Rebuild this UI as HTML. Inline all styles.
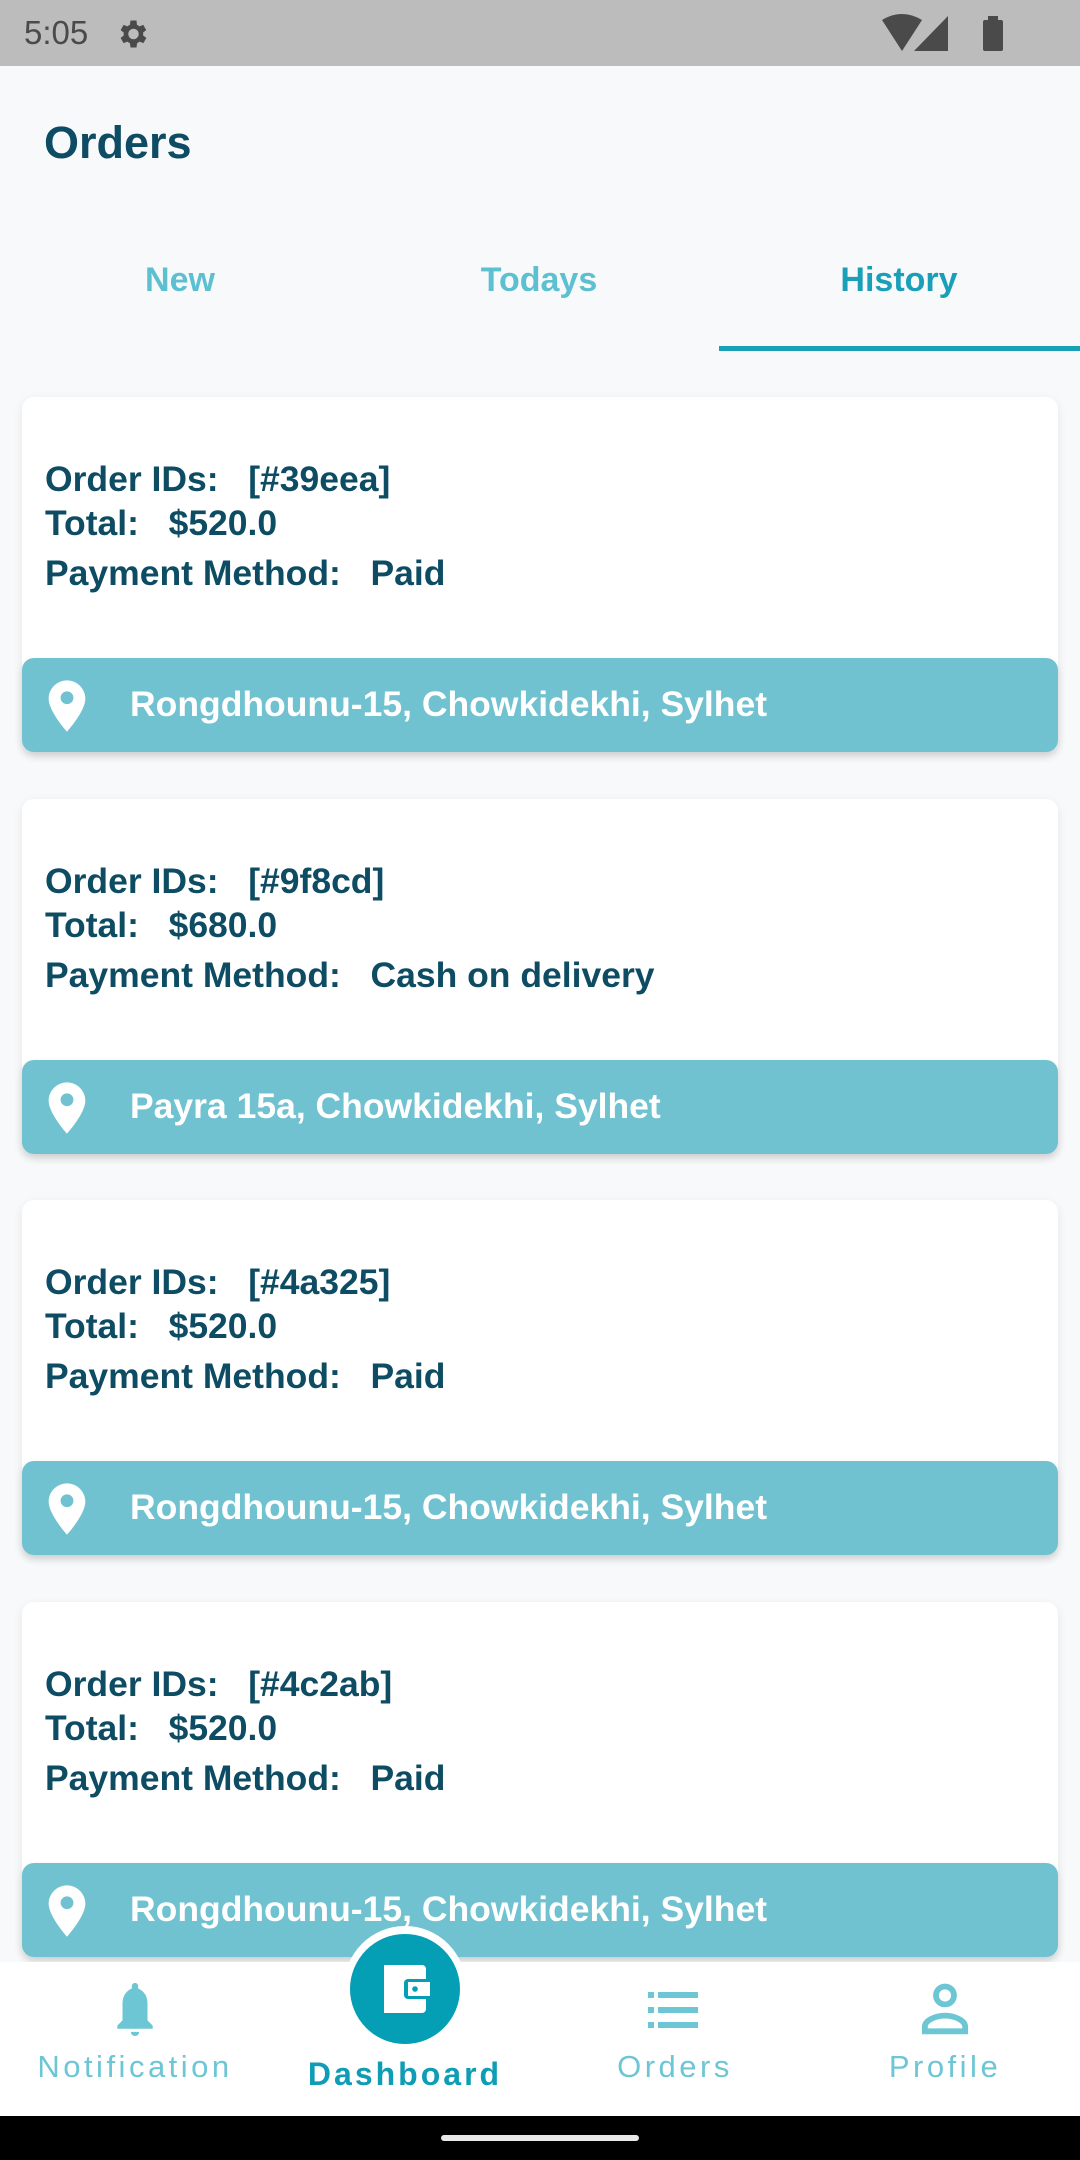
<!DOCTYPE html>
<html><head><meta charset="utf-8"><style>
*{margin:0;padding:0;box-sizing:border-box}
body{width:1080px;height:2160px;background:#f8f9fa;font-family:"Liberation Sans",Arial,sans-serif;position:relative;overflow:hidden}
.abs{position:absolute}
.status{left:0;top:0;width:1080px;height:66px;background:#bcbcbc}
.card{left:22px;width:1036px;height:355px;background:#fff;border-radius:12px;box-shadow:0 3px 10px rgba(0,0,0,0.08)}
.line{position:absolute;left:23px;font-size:35.5px;font-weight:bold;color:#0d4c63;white-space:pre;line-height:40px}
.addr{position:absolute;left:0;top:261px;width:1036px;height:94px;background:#70c2d0;border-radius:12px;box-shadow:0 4px 8px rgba(0,0,0,0.12)}
.addr span{position:absolute;left:108px;top:26px;font-size:35.5px;font-weight:bold;color:#fff;line-height:40px;white-space:nowrap}
.addr svg{position:absolute;left:23px;top:20px}
.tab{top:261px;font-size:34px;font-weight:bold;color:#5cc0d1;width:360px;text-align:center}
.nl{font-size:31px;color:#6cc6d4;letter-spacing:3.5px;text-align:center;width:270px;top:2049px}
</style></head><body>
<div class="abs status"></div>
<div class="abs" style="left:24px;top:14px;font-size:33px;color:#4a4a4a">5:05</div>
<svg class="abs" style="left:114px;top:16px" width="36" height="36" viewBox="0 0 24 24"><path fill="#4a4a4a" d="M19.4 13a7.5 7.5 0 000-2l2.1-1.6-2-3.5-2.5 1a7 7 0 00-1.7-1L15 3h-4l-.4 2.9a7 7 0 00-1.7 1l-2.5-1-2 3.5L6.5 11a7.5 7.5 0 000 2l-2.1 1.6 2 3.5 2.5-1a7 7 0 001.7 1L11 21h4l.4-2.9a7 7 0 001.7-1l2.5 1 2-3.5zM13 15.5a3.5 3.5 0 110-7 3.5 3.5 0 010 7z"/></svg>
<svg class="abs" style="left:880px;top:14px" width="130" height="40" viewBox="0 0 130 40"><path fill="#4a4a4a" d="M2 6 Q22 -6 42 6 L22 37Z"/><path fill="#4a4a4a" d="M68 2 L68 37 L34 37Z"/><rect x="103" y="6" width="20" height="31" rx="2" fill="#4a4a4a"/><rect x="108" y="2" width="10" height="5" fill="#4a4a4a"/></svg>

<div class="abs" style="left:44px;top:117px;font-size:45px;font-weight:bold;color:#0d4c63">Orders</div>
<div class="abs tab" style="left:0">New</div>
<div class="abs tab" style="left:359px">Todays</div>
<div class="abs tab" style="left:719px;color:#1a9fb8">History</div>
<div class="abs" style="left:719px;top:346px;width:361px;height:5px;background:#17a0b7"></div>

<div class="abs card" style="top:397px">
<div class="line" style="top:62px">Order IDs:   [#39eea]</div>
<div class="line" style="top:106px">Total:   $520.0</div>
<div class="line" style="top:156px">Payment Method:   Paid</div>
<div class="addr"><svg width="44" height="56" viewBox="0 0 24 30"><path fill="#fff" d="M12 1C6.5 1 2 5.5 2 11c0 7 10 18 10 18s10-11 10-18C22 5.5 17.5 1 12 1zm0 13a3.5 3.5 0 110-7 3.5 3.5 0 010 7z"/></svg><span>Rongdhounu-15, Chowkidekhi, Sylhet</span></div>
</div>
<div class="abs card" style="top:799px">
<div class="line" style="top:62px">Order IDs:   [#9f8cd]</div>
<div class="line" style="top:106px">Total:   $680.0</div>
<div class="line" style="top:156px">Payment Method:   Cash on delivery</div>
<div class="addr"><svg width="44" height="56" viewBox="0 0 24 30"><path fill="#fff" d="M12 1C6.5 1 2 5.5 2 11c0 7 10 18 10 18s10-11 10-18C22 5.5 17.5 1 12 1zm0 13a3.5 3.5 0 110-7 3.5 3.5 0 010 7z"/></svg><span>Payra 15a, Chowkidekhi, Sylhet</span></div>
</div>
<div class="abs card" style="top:1200px">
<div class="line" style="top:62px">Order IDs:   [#4a325]</div>
<div class="line" style="top:106px">Total:   $520.0</div>
<div class="line" style="top:156px">Payment Method:   Paid</div>
<div class="addr"><svg width="44" height="56" viewBox="0 0 24 30"><path fill="#fff" d="M12 1C6.5 1 2 5.5 2 11c0 7 10 18 10 18s10-11 10-18C22 5.5 17.5 1 12 1zm0 13a3.5 3.5 0 110-7 3.5 3.5 0 010 7z"/></svg><span>Rongdhounu-15, Chowkidekhi, Sylhet</span></div>
</div>
<div class="abs card" style="top:1602px">
<div class="line" style="top:62px">Order IDs:   [#4c2ab]</div>
<div class="line" style="top:106px">Total:   $520.0</div>
<div class="line" style="top:156px">Payment Method:   Paid</div>
<div class="addr"><svg width="44" height="56" viewBox="0 0 24 30"><path fill="#fff" d="M12 1C6.5 1 2 5.5 2 11c0 7 10 18 10 18s10-11 10-18C22 5.5 17.5 1 12 1zm0 13a3.5 3.5 0 110-7 3.5 3.5 0 010 7z"/></svg><span>Rongdhounu-15, Chowkidekhi, Sylhet</span></div>
</div>

<div class="abs" style="left:0;top:1962px;width:1080px;height:154px;background:#fff"></div>
<div class="abs" style="left:344px;top:1926px;width:122px;height:122px;border-radius:50%;background:#fff"></div>
<div class="abs" style="left:350px;top:1934px;width:110px;height:110px;border-radius:50%;background:#049fb5"></div>
<svg class="abs" style="left:378px;top:1963px" width="56" height="52" viewBox="0 0 28 26"><path fill="#fff" d="M3 1h19a2 2 0 012 2v5h-9a2 2 0 00-2 2v6a2 2 0 002 2h9v5a2 2 0 01-2 2H3z"/><rect x="15" y="9.5" width="11" height="7" fill="#fff"/><circle cx="18.5" cy="13" r="1.4" fill="#049fb5"/></svg>
<svg class="abs" style="left:110px;top:1980px" width="50" height="60" viewBox="0 0 24 28"><path fill="#6cc6d4" d="M12 1a1.5 1.5 0 011.5 1.5v1.2C16.5 5 18 7.5 18 11v8l2.5 2.5V23h-17v-1.5L6 19v-8c0-3.5 1.5-6 4.5-7.3V2.5A1.5 1.5 0 0112 1zM10 24.5h4a2 2 0 01-4 0z"/></svg>
<svg class="abs" style="left:647px;top:1990px" width="54" height="40" viewBox="0 0 26 20"><rect x="0" y="1" width="3" height="3" fill="#6cc6d4"/><rect x="5" y="1" width="20" height="3" fill="#6cc6d4"/><rect x="0" y="8.5" width="3" height="3" fill="#6cc6d4"/><rect x="5" y="8.5" width="20" height="3" fill="#6cc6d4"/><rect x="0" y="16" width="3" height="3" fill="#6cc6d4"/><rect x="5" y="16" width="20" height="3" fill="#6cc6d4"/></svg>
<svg class="abs" style="left:918px;top:1982px" width="54" height="56" viewBox="0 0 24 25"><circle cx="12" cy="6" r="4" fill="none" stroke="#6cc6d4" stroke-width="2.6"/><path fill="none" stroke="#6cc6d4" stroke-width="2.6" d="M3 22v-2c0-3 5-5 9-5s9 2 9 5v2z"/></svg>
<div class="abs nl" style="left:0">Notification</div>
<div class="abs nl" style="left:270px;top:2056px;color:#0f9db5;font-weight:bold;font-size:32px;letter-spacing:3px">Dashboard</div>
<div class="abs nl" style="left:540px">Orders</div>
<div class="abs nl" style="left:810px">Profile</div>
<div class="abs" style="left:0;top:2116px;width:1080px;height:44px;background:#000"></div>
<div class="abs" style="left:441px;top:2135px;width:198px;height:6px;border-radius:3px;background:#e8e8e8"></div>
</body></html>
